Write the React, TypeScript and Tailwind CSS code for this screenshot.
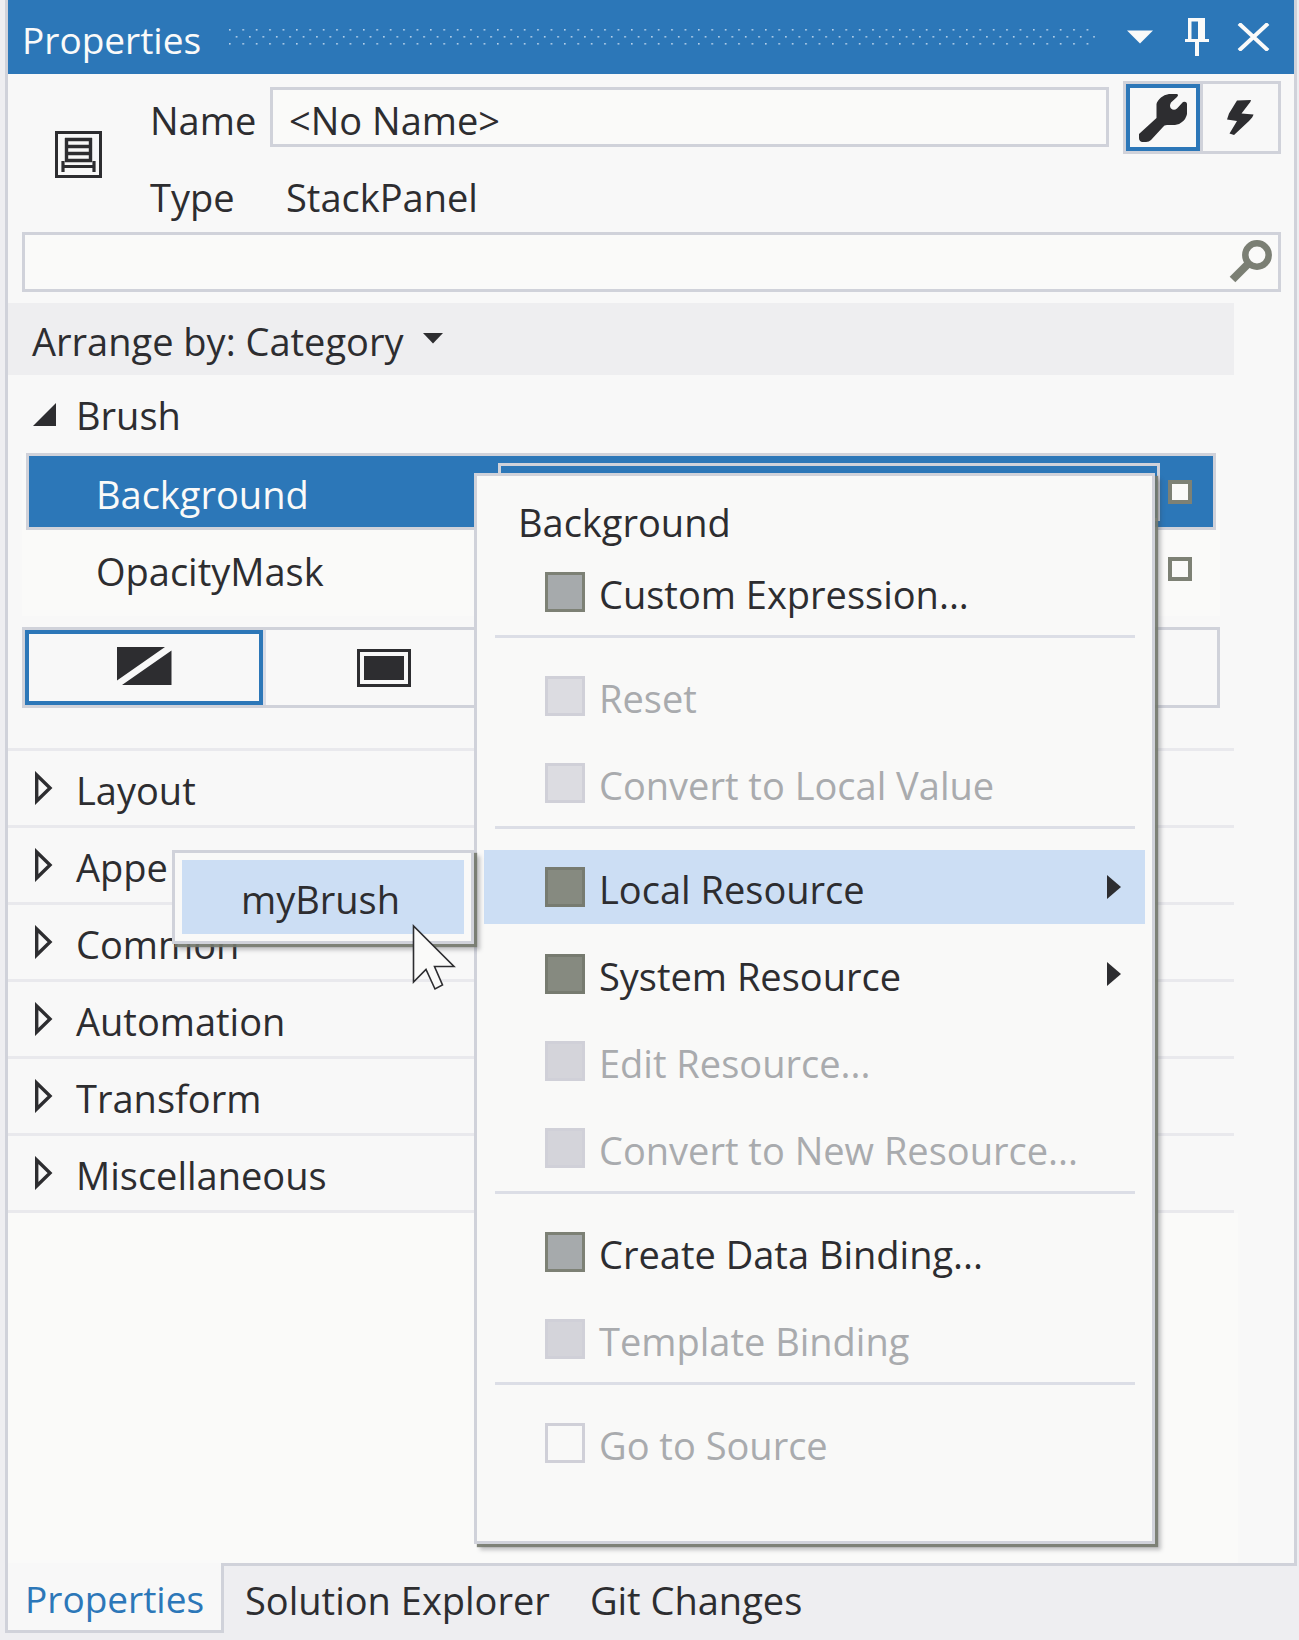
import React from "react";

type MenuItem = {
  label: string;
  swatch: string;
  disabled?: boolean;
  active?: boolean;
  submenu?: boolean;
};

const SWATCH_VALUE = "border-[#7d8175] bg-[#a6aaac]";
const SWATCH_RESOURCE = "border-[#777b70] bg-[#868a80]";
const SWATCH_OFF = "border-[#d0d0d8] bg-[#dcdce1]";
const SWATCH_OFF_SOLID = "border-[#d0d0d8] bg-[#d4d4da]";
const SWATCH_EMPTY = "border-[#d0d0d8] bg-transparent";

const menuGroups: MenuItem[][] = [
  [{ label: "Custom Expression...", swatch: SWATCH_VALUE }],
  [
    { label: "Reset", swatch: SWATCH_OFF, disabled: true },
    { label: "Convert to Local Value", swatch: SWATCH_OFF, disabled: true },
  ],
  [
    { label: "Local Resource", swatch: SWATCH_RESOURCE, active: true, submenu: true },
    { label: "System Resource", swatch: SWATCH_RESOURCE, submenu: true },
    { label: "Edit Resource...", swatch: SWATCH_OFF_SOLID, disabled: true },
    { label: "Convert to New Resource...", swatch: SWATCH_OFF_SOLID, disabled: true },
  ],
  [
    { label: "Create Data Binding...", swatch: SWATCH_VALUE },
    { label: "Template Binding", swatch: SWATCH_OFF_SOLID, disabled: true },
  ],
  [{ label: "Go to Source", swatch: SWATCH_EMPTY, disabled: true }],
];

const categories = [
  { name: "Layout", text: "Layout" },
  { name: "Appearance", text: "Appe" },
  { name: "Common", text: "Common" },
  { name: "Automation", text: "Automation" },
  { name: "Transform", text: "Transform" },
  { name: "Miscellaneous", text: "Miscellaneous" },
];

function TitleBar() {
  return (
    <header className="flex h-[74px] items-center bg-[#2c77b8] pl-3.5 pr-6 text-[37px] text-[#fafaf9]">
      <h1 className="w-[207px] pt-1.5">Properties</h1>
      <svg className="h-[18px] min-w-0 flex-1" aria-hidden="true">
        <defs>
          <pattern id="grip" width="13.4" height="18" patternUnits="userSpaceOnUse">
            <rect x="0" y="1" width="1.6" height="1.6" fill="#b9d2ea" />
            <rect x="6.7" y="8" width="1.6" height="1.6" fill="#b9d2ea" />
            <rect x="0" y="15" width="1.6" height="1.6" fill="#b9d2ea" />
          </pattern>
        </defs>
        <rect width="100%" height="18" fill="url(#grip)" />
      </svg>
      <div className="ml-8 flex items-center">
        <button aria-label="Window position" className="flex w-[26px] justify-center">
          <svg width="26" height="14" viewBox="0 0 26 14" fill="currentColor">
            <path d="M0 0.500H26L13 13.500Z" />
          </svg>
        </button>
        <button aria-label="Auto hide" className="ml-8 flex w-6 justify-center">
          <svg width="24" height="38" viewBox="0 0 24 38" fill="currentColor">
            <path fillRule="evenodd" d="M3 0H20V21H24V24H14V38H10V24H0V21H3ZM6.500 3.500V21H13V3.500Z" />
          </svg>
        </button>
        <button aria-label="Close" className="ml-7 flex w-[33px] justify-center">
          <svg width="33" height="28" viewBox="0 0 33 28" fill="none" stroke="currentColor" strokeWidth="4">
            <path d="M2 0.500L31 27.500M31 0.500L2 27.500" />
          </svg>
        </button>
      </div>
    </header>
  );
}

function StackPanelIcon() {
  return (
    <svg width="48" height="48" viewBox="0 0 48 48" fill="none" stroke="#2d2d30" aria-hidden="true">
      <rect x="1.500" y="1.500" width="44" height="44" strokeWidth="3" />
      <path d="M11.500 7V31M35.500 7V31M10 8.500H37M11 15.500H36M11 22.500H36M10 29.500H37" strokeWidth="3.400" />
      <path d="M8 30V41M39 30V41M8 35.500H39" strokeWidth="3.200" />
    </svg>
  );
}

function Identity() {
  return (
    <section className="flex items-start pl-[47px] pr-[13px] pt-[7px]">
      <div className="mt-[50px] w-[95px] shrink-0">
        <StackPanelIcon />
      </div>
      <div className="min-w-0 flex-1 pt-1.5">
        <div className="flex h-[60px] items-center">
          <label htmlFor="element-name" className="w-[120px] shrink-0 pt-1.5">
            Name
          </label>
          <input
            id="element-name"
            defaultValue="<No Name>"
            className="h-[60px] w-full min-w-0 border-[3px] border-[#d0d2da] bg-[#fafaf9] px-4 pt-1.5 outline-none"
          />
        </div>
        <div className="flex h-[85px] items-center pt-3.5">
          <span className="w-[136px]">Type</span>
          <span>StackPanel</span>
        </div>
      </div>
      <div className="ml-[14px] flex h-[73px] border-[3px] border-[#d0d2da]">
        <button aria-label="Properties" className="flex w-[74px] items-center justify-center border-4 border-[#2c77b8]">
          <svg width="48" height="48" viewBox="0 0 48 48" fill="#2d2d30">
            <path d="M0 40L17.500 24V10Q18 7 22 3.500Q25 0.500 30 0H38Q40 1 38 3L32 8.500Q30 12 32 14.500Q35 17 38 14.500L44 8Q48 7 48 10.500V20Q47 25 43 28Q40 31 36 31H28Q25 31 24 33L12 46Q10 48 7 48H3Q0 47 0 44Z" />
          </svg>
        </button>
        <button aria-label="Events" className="flex w-[78px] items-center justify-center border-l-[3px] border-[#d0d2da]">
          <svg width="27" height="35" viewBox="0 0 27 35" fill="#2d2d30">
            <path d="M10 0.500L24 0Q24 2 21 5L14.500 13.500L26.500 14.500Q26 17 22 21L7 35L2.500 33.500L10 21L0 19.500L2 13.500Z" />
          </svg>
        </button>
      </div>
    </section>
  );
}

function SearchBox() {
  return (
    <div className="ml-[14px] mr-[13px] flex h-[60px] items-center border-[3px] border-[#d0d2da] bg-[#fafaf9] pr-[5px]">
      <input aria-label="Search properties" className="h-full min-w-0 flex-1 px-4 outline-none" />
      <button aria-label="Search">
        <svg width="44" height="44" viewBox="0 0 44 44" fill="none" stroke="#7b7f74">
          <circle cx="28" cy="15" r="11.700" strokeWidth="6.500" />
          <path d="M20 23L3.500 39.500" strokeWidth="8" />
        </svg>
      </button>
    </div>
  );
}

function Marker() {
  return <button aria-label="Property marker" className="size-6 border-4 border-[#7d8175] bg-[#fafaf9]" />;
}

function BrushEditor() {
  return (
    <div className="pl-[14px] pr-[74px]">
      <div className="flex h-[163px] flex-col bg-[#fafaf9] pl-1">
        <div className="mr-1 flex h-[77px] items-center border-[3px] border-[#d0d2da] bg-[#2c77b8] pl-[67px] pr-[21px] text-[#fafaf9]">
          <span className="w-[402px] pt-1">Background</span>
          <div className="h-[58px] flex-1 border-[3px] border-[#d0d2da]" />
          <div className="ml-2 flex">
            <Marker />
          </div>
        </div>
        <div className="mr-1 flex h-[77px] items-center pl-[70px] pr-6">
          <span className="flex-1 pt-1">OpacityMask</span>
          <Marker />
        </div>
      </div>
      <div className="mt-[11px] grid h-[81px] grid-cols-5 border-[3px] border-[#d0d2da]">
        <button aria-label="No brush" className="flex items-center justify-center border-4 border-[#2c77b8]">
          <svg width="55" height="38" viewBox="0 0 55 38" className="-mt-1" fill="#2d2d30">
            <path d="M0 0H48L0 33.500ZM54.500 3.500V38H5Z" />
          </svg>
        </button>
        <button aria-label="Solid color brush" className="flex items-center justify-center border-l-[3px] border-[#d9dce6]">
          <svg width="54" height="38" viewBox="0 0 54 38" fill="none">
            <rect x="1.500" y="1.500" width="51" height="35" stroke="#2d2d30" strokeWidth="3" />
            <rect x="7" y="7" width="40" height="24" fill="#2d2d30" />
          </svg>
        </button>
        <button aria-label="Gradient brush" />
        <button aria-label="Tile brush" />
        <button aria-label="Brush resources" />
      </div>
    </div>
  );
}

function Categories() {
  return (
    <div className="mr-[60px] mt-10">
      <ul className="border-t-[3px] border-[#e9e9ed]">
        {categories.map(({ name, text }) => (
          <li key={name} className="border-b-[3px] border-[#e9e9ed]">
            <button aria-label={name} className="flex h-[74px] w-full items-center pl-[27px] text-left">
              <svg width="18" height="34" viewBox="0 0 18 34" fill="none" stroke="#2d2d30" strokeWidth="3.400" aria-hidden="true">
                <path d="M1.700 4V30L15 17Z" />
              </svg>
              <span className="ml-[23px] pt-1">{text}</span>
            </button>
          </li>
        ))}
      </ul>
    </div>
  );
}

function ContextMenu() {
  return (
    <div
      role="menu"
      aria-label="Background"
      className="absolute left-[474px] top-[473px] z-10 w-[681px] border-[3px] border-[#d0d2da] bg-[#f9f9f8] pb-[55px] shadow-[3px_3px_1px_0_rgba(118,122,110,0.900),6px_6px_4px_0_rgba(60,62,70,0.300)]"
    >
      <div className="flex h-[72px] items-center pl-[41px] pt-5">Background</div>
      {menuGroups.map((group, index) => (
        <div key={group[0].label}>
          {index > 0 && <div role="separator" className="mb-[14px] ml-[18px] mr-[17px] h-[3px] bg-[#dcdee6]" />}
          {group.map((item) => (
            <div key={item.label} className="flex h-[87px] items-center px-[7px]">
              <button
                role="menuitem"
                disabled={item.disabled}
                className={
                  "flex h-[74px] w-full items-center pl-[61px] pr-6 text-left " +
                  (item.active ? "bg-[#ccdef4] " : "") +
                  (item.disabled ? "text-[#a9abae]" : "")
                }
              >
                <span className={"size-10 shrink-0 border-[3px] " + item.swatch} />
                <span className="ml-[14px] flex-1 whitespace-nowrap pt-1">{item.label}</span>
                {item.submenu && (
                  <svg width="14" height="24" viewBox="0 0 14 24" fill="#2d2d30" aria-hidden="true">
                    <path d="M0 0V24L14 12Z" />
                  </svg>
                )}
              </button>
            </div>
          ))}
        </div>
      ))}
    </div>
  );
}

function ResourceSubmenu() {
  return (
    <div
      role="menu"
      aria-label="Local Resource"
      className="absolute left-[172px] top-[850px] z-20 w-[302px] border-[3px] border-[#d0d2da] bg-[#f9f9f8] p-[7px] shadow-[3px_3px_1px_0_rgba(118,122,110,0.900),6px_6px_4px_0_rgba(60,62,70,0.300)]"
    >
      <button role="menuitem" className="flex h-[74px] w-full items-center bg-[#ccdef4] pl-[59px] pt-1">
        myBrush
      </button>
    </div>
  );
}

function Pointer() {
  return (
    <svg
      className="absolute left-[411px] top-[922px] z-30"
      width="46"
      height="70"
      viewBox="0 0 46 70"
      fill="#fafaf9"
      stroke="#2d2d30"
      strokeWidth="1.600"
      aria-hidden="true"
    >
      <path d="M2.500 4V60L15 47.500L24 67L31.500 63L23.500 44.500H43Z" />
    </svg>
  );
}

export default function App() {
  return (
    <div className="relative flex min-h-screen flex-col bg-[#eeeef1] font-['Open_Sans',sans-serif] text-[38px] leading-[50px] text-[#2d2d30]">
      <div className="ml-[5px] mr-[2px] flex flex-1 flex-col border-x-[3px] border-[#d0d2da] bg-[#f8f8f8]">
        <TitleBar />
        <Identity />
        <SearchBox />
        <div className="mr-[60px] mt-[11px] flex h-[72px] items-center bg-[#eeeef0] pl-6">
          <button className="flex items-center pt-1">
            Arrange by: Category
            <svg className="mb-1.5 ml-5" width="20" height="11" viewBox="0 0 20 11" fill="#2d2d30" aria-hidden="true">
              <path d="M0 0H20L10 10.500Z" />
            </svg>
          </button>
        </div>
        <button className="flex h-[78px] items-center pl-[25px] text-left">
          <svg width="23" height="23" viewBox="0 0 23 23" fill="#2d2d30" aria-hidden="true">
            <path d="M23 0V23H0Z" />
          </svg>
          <span className="ml-5 pt-0.5">Brush</span>
        </button>
        <BrushEditor />
        <Categories />
        <div className="mr-[56px] flex-1 bg-[#fafaf9]" />
      </div>
      <nav className="ml-[5px] mr-[2px] flex h-[77px] items-start">
        <a
          href="#properties"
          className="flex h-[70px] w-[219px] shrink-0 items-center border-[3px] border-t-0 border-[#d0d2da] bg-[#f8f8f8] pl-[17px] pt-1 text-[37px] text-[#2c77b8]"
        >
          Properties
        </a>
        <div className="flex h-[70px] flex-1 items-center gap-10 border-t-[3px] border-[#d0d2da] pl-[21px]">
          <a href="#solution-explorer">Solution Explorer</a>
          <a href="#git-changes">Git Changes</a>
        </div>
      </nav>
      <ContextMenu />
      <ResourceSubmenu />
      <Pointer />
    </div>
  );
}
